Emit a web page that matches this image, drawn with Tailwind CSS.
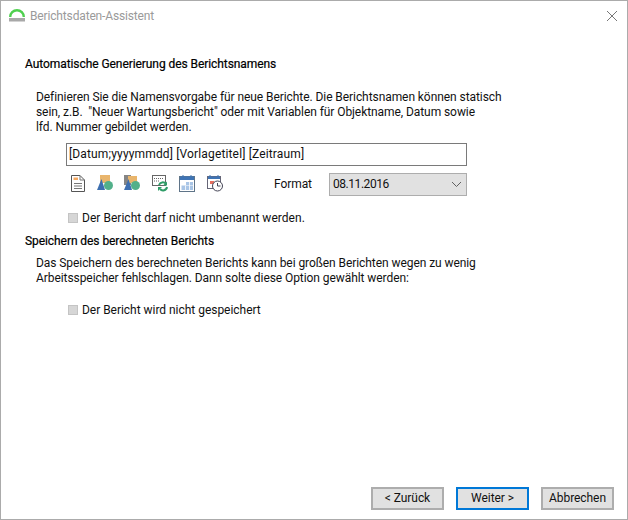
<!DOCTYPE html>
<html lang="de"><head><meta charset="utf-8"><title>Berichtsdaten-Assistent</title>
<script src="https://cdn.jsdelivr.net/npm/@tailwindcss/browser@4"></script></head>
<body class="m-0 bg-white">
<div class="w-[628px] h-[520px] box-border border border-[#ababab] bg-white flex flex-col font-['Roboto',sans-serif] text-[12px] leading-[15px] text-[#111] tracking-[-0.07px] overflow-hidden">
  <header class="h-[30px] shrink-0 flex items-center pl-[8px] pr-[10px]">
    <svg class="w-[16px] h-[14px]" viewBox="0 0 16 14"><path d="M1.200 8A6.800 6.800 0 0 1 14.800 8" fill="none" stroke="#4fd04f" stroke-width="2.400"/><rect x="0" y="9" width="16" height="3.500" fill="#a8a8a8"/></svg>
    <span class="ml-[5px] text-[#9a9a9a] tracking-[-0.15px]">Berichtsdaten-Assistent</span>
    <svg class="ml-auto w-[10px] h-[10px]" viewBox="0 0 10 10"><path d="M0 0L10 10M10 0L0 10" stroke="#777" stroke-width="1"/></svg>
  </header>
  <main class="flex-1 flex flex-col pl-[24px]">
    <h2 class="mt-[26px] text-black [-webkit-text-stroke:0.2px_black]">Automatische Generierung des Berichtsnamens</h2>
    <p class="mt-[18px] ml-[11px] w-[480px]">Definieren Sie die Namensvorgabe für neue Berichte. Die Berichtsnamen können statisch<br>sein, z.B.&nbsp; "Neuer Wartungsbericht" oder mit Variablen für Objektname, Datum sowie<br>lfd. Nummer gebildet werden.</p>
    <div class="mt-[8px] ml-[41px] w-[401px] h-[23px] box-border border border-[#7a7a7a] flex items-center px-[2px] tracking-[0.15px]">[Datum;yyyymmdd] [Vorlagetitel] [Zeitraum]</div>
    <div class="mt-[7px] ml-[46px] flex items-center h-[23px]">
      <div class="flex w-[203px] mb-[2px]">
        <svg class="w-[14px] h-[17px]" viewBox="0 0 14 17"><path d="M.5 .5H9L13.500 5V16.500H.5Z" fill="#fff" stroke="#555"/><path d="M9 .5V5H13.500" fill="none" stroke="#777"/><rect x="2.500" y="2.500" width="4.500" height="2.500" fill="#f5a860"/><path d="M3 8.500H11M3 11H11M3 13.500H11" stroke="#777"/></svg>
        <svg class="w-[16px] h-[16px] ml-[12px]" viewBox="0 0 16 16"><rect x="3" y="0" width="10" height="8" fill="#e9b56c"/><path d="M0 15L4.500 4L8 15Z" fill="#3d6fb0"/><circle cx="11.500" cy="10.500" r="4.500" fill="#52b08a"/></svg>
        <svg class="w-[16px] h-[16px] ml-[11px]" viewBox="0 0 16 16"><rect x="0" y="0" width="7" height="10" fill="#858585"/><rect x="4" y="1" width="9" height="7" fill="#e9b56c"/><path d="M0 15L4.500 4L8 15Z" fill="#3d6fb0"/><circle cx="11.500" cy="10.500" r="4.500" fill="#52b08a"/></svg>
        <svg class="w-[17px] h-[17px] ml-[12px]" viewBox="0 0 17 17"><rect x="0.500" y="0.500" width="13" height="10" fill="#fff" stroke="#666"/><path d="M2 3.500H12M2 6H8" stroke="#666" stroke-dasharray="1 1"/><path d="M7 10A4 4 0 0 1 14 9M15 12A4 4 0 0 1 8 14" fill="none" stroke="#2f9d68" stroke-width="2"/><path d="M15 6.500V10.500H11ZM6 16V12H10Z" fill="#2f9d68"/></svg>
        <svg class="w-[16px] h-[17px] ml-[10px]" viewBox="0 0 16 17"><rect x="0.500" y="1.500" width="15" height="15" fill="#fff" stroke="#5f7488"/><rect x="1" y="1.500" width="14" height="3.500" fill="#3f74b5"/><path d="M4 0V3M12 0V3" stroke="#3f74b5"/><path d="M7 7H14V10H7ZM2.500 10.500H14V15H2.500Z" fill="#a9c5e6"/><path d="M10.500 7V15M6.500 10.500V15" stroke="#fff" stroke-width=".8"/></svg>
        <svg class="w-[16px] h-[17px] ml-[12px]" viewBox="0 0 16 17"><rect x="0.500" y="1.500" width="13" height="12" fill="#fff" stroke="#667"/><rect x="1" y="1.500" width="12" height="2.500" fill="#3f74b5"/><path d="M3 0V3M11 0V3" stroke="#3f74b5"/><rect x="3" y="6" width="4" height="3" fill="#e87060"/><circle cx="10.500" cy="11" r="5" fill="#fff" stroke="#445"/><path d="M10.500 8V11H13.500" fill="none" stroke="#445"/></svg>
      </div>
      <span class="w-[55px]">Format</span>
      <div class="w-[138px] h-[23px] box-border border border-[#adadad] bg-[#e1e1e1] flex items-center pl-[3px] pr-[4px]">
        <span class="tracking-[-0.45px]">08.11.2016</span>
        <svg class="ml-auto w-[11px] h-[7px]" viewBox="0 0 11 7"><path d="M1 1L5.500 5.500L10 1" fill="none" stroke="#606060"/></svg>
      </div>
    </div>
    <label class="mt-[14px] ml-[43px] flex items-center gap-[4px] h-[16px] tracking-[0.03px]"><span class="w-[8px] h-[8px] bg-[#d6d6d6] border border-[#c4c4c4] box-content"></span>Der Bericht darf nicht umbenannt werden.</label>
    <h2 class="mt-[8px] text-black [-webkit-text-stroke:0.2px_black]">Speichern des berechneten Berichts</h2>
    <p class="mt-[7px] ml-[11px] w-[480px]">Das Speichern des berechneten Berichts kann bei großen Berichten wegen zu wenig Arbeitsspeicher fehlschlagen. Dann solte diese Option gewählt werden:</p>
    <label class="mt-[16px] ml-[43px] flex items-center gap-[4px] h-[16px] tracking-[-0.03px]"><span class="w-[8px] h-[8px] bg-[#d6d6d6] border border-[#c4c4c4] box-content"></span>Der Bericht wird nicht gespeichert</label>
  </main>
  <footer class="h-[32px] shrink-0 flex justify-end gap-[12px] pr-[13px]">
    <button class="w-[73px] h-[23px] box-border border-2 border-[#adadad] bg-[#e1e1e1]">&lt; Zurück</button>
    <button class="w-[73px] h-[23px] box-border border-2 border-[#0078d7] bg-[#e1e1e1]">Weiter &gt;</button>
    <button class="w-[73px] h-[23px] box-border border-2 border-[#adadad] bg-[#e1e1e1]">Abbrechen</button>
  </footer>
</div>
</body></html>
